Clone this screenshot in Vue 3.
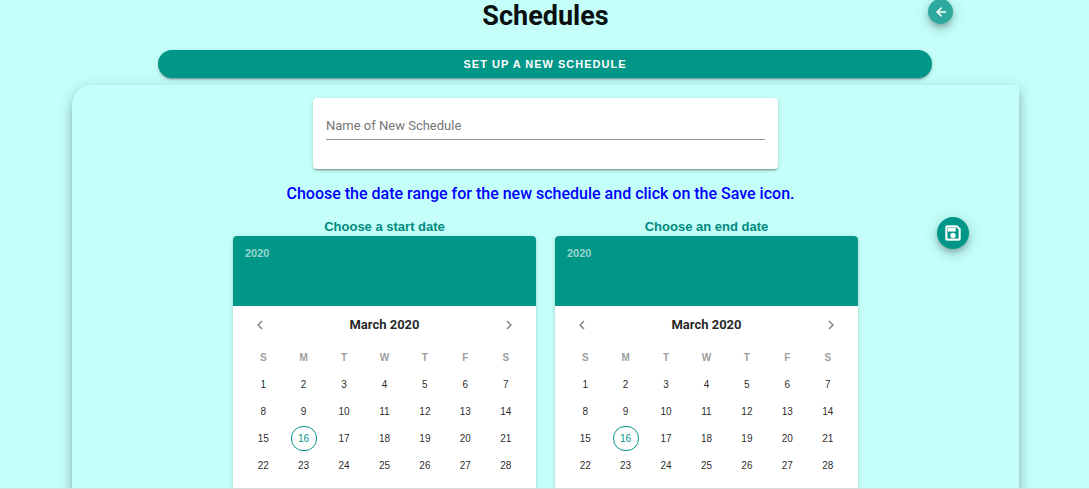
<script setup>
import { ref } from 'vue'

const name = ref('')
const weekdays = ['S', 'M', 'T', 'W', 'T', 'F', 'S']
const weeks = [0, 1, 2, 3].map((w) => weekdays.map((_, d) => w * 7 + d + 1))
const today = 16
const pickers = [
  { id: 'start', label: 'Choose a start date' },
  { id: 'end', label: 'Choose an end date' },
]
</script>

<template>
  <main class="page">
    <header class="top">
      <h1>Schedules</h1>
      <button class="round back" type="button" aria-label="Back">
        <svg viewBox="0 0 24 24" width="14" height="14" fill="currentColor" stroke="currentColor">
          <path d="M20 11v2H8l5.500 5.500-1.420 1.420L4.160 12l7.920-7.920L13.500 5.500 8 11h12z" />
        </svg>
      </button>
    </header>

    <button class="setup" type="button">SET UP A NEW SCHEDULE</button>

    <section class="panel">
      <div class="name-card">
        <input v-model="name" type="text" placeholder="Name of New Schedule" aria-label="Name of New Schedule" />
      </div>
      <p class="hint">Choose the date range for the new schedule and click on the Save icon.</p>

      <div class="range">
        <div class="pickers">
          <section v-for="p in pickers" :key="p.id" class="picker">
            <h2 :id="p.id">{{ p.label }}</h2>
            <div class="calendar">
              <div class="year"><button type="button">2020</button></div>
              <div class="month">
                <button class="arrow" type="button" aria-label="Previous month">
                  <svg viewBox="0 0 24 24" width="18" height="18" fill="currentColor">
                    <path d="M15.410 16.580L10.830 12l4.580-4.590L14 6l-6 6 6 6 1.410-1.420z" />
                  </svg>
                </button>
                <button class="month-name" type="button">March 2020</button>
                <button class="arrow" type="button" aria-label="Next month">
                  <svg viewBox="0 0 24 24" width="18" height="18" fill="currentColor">
                    <path d="M8.590 16.580L13.170 12 8.590 7.410 10 6l6 6-6 6-1.410-1.420z" />
                  </svg>
                </button>
              </div>
              <table :aria-labelledby="p.id">
                <thead>
                  <tr><th v-for="(d, i) in weekdays" :key="i" scope="col">{{ d }}</th></tr>
                </thead>
                <tbody>
                  <tr v-for="(week, i) in weeks" :key="i">
                    <td v-for="day in week" :key="day">
                      <button type="button" class="day" :class="{ today: day === today }">{{ day }}</button>
                    </td>
                  </tr>
                </tbody>
              </table>
            </div>
          </section>
        </div>
        <button class="round save" type="button" aria-label="Save">
          <svg viewBox="0 0 24 24" width="20" height="20" fill="currentColor" stroke="currentColor" stroke-width="0.500">
            <path fill-rule="evenodd" d="M17 3H5a2 2 0 0 0-2 2v14a2 2 0 0 0 2 2h14a2 2 0 0 0 2-2V7l-4-4zm2 16H5V5h11.170L19 7.830V19zM12 12a3 3 0 1 0 0 6 3 3 0 0 0 0-6zM6 6h9v4H6z" />
          </svg>
        </button>
      </div>
    </section>
  </main>
</template>

<style>
body {
  margin: 0;
  background: #c4fffa;
}
</style>

<style scoped>
* {
  box-sizing: border-box;
}
.page {
  display: flex;
  flex-direction: column;
  height: 100vh;
  overflow: hidden;
  padding: 0 70px 0 72px;
  border-bottom: 1px solid #dadada;
  background: #c4fffa;
  font-family: Roboto, "Liberation Sans", sans-serif;
  color: rgba(0, 0, 0, 0.87);
}
button {
  padding: 0;
  border: 0;
  background: none;
  color: inherit;
  font: inherit;
  cursor: pointer;
}
.top {
  display: grid;
  grid-template-columns: 1fr auto 1fr;
  flex: none;
  height: 50px;
}
h1 {
  grid-column: 2;
  margin: 0;
  color: #0a0f0f;
  font-size: 27px;
  font-weight: 700;
  line-height: 32px;
}
.round {
  display: flex;
  align-items: center;
  justify-content: center;
  justify-self: end;
  border-radius: 50%;
  background: #009688;
  color: #fff;
  box-shadow: 0 3px 5px -1px rgba(0, 0, 0, 0.2), 0 6px 10px rgba(0, 0, 0, 0.14), 0 1px 18px rgba(0, 0, 0, 0.12);
}
.back {
  width: 25px;
  height: 25px;
  margin: -1px 66px 0 0;
  background: #2ea99d;
}
.setup {
  flex: none;
  height: 28px;
  margin: 0 87px 7px 86px;
  border-radius: 14px;
  background: #009688;
  color: #fff;
  font-family: "Liberation Sans", Arial, sans-serif;
  font-size: 11px;
  font-weight: 700;
  letter-spacing: 1px;
  box-shadow: 0 3px 1px -2px rgba(0, 0, 0, 0.2), 0 2px 2px rgba(0, 0, 0, 0.14), 0 1px 5px rgba(0, 0, 0, 0.12);
}
.panel {
  display: flex;
  flex-direction: column;
  align-items: center;
  flex: none;
  padding: 13px 0 40px;
  border-radius: 20px 4px 4px 20px;
  background: #c4fffa;
  box-shadow: 0 5px 5px -3px rgba(0, 0, 0, 0.2), 0 8px 10px 1px rgba(0, 0, 0, 0.14), 0 3px 14px 2px rgba(0, 0, 0, 0.12);
}
.name-card {
  width: 465px;
  max-width: 100%;
  height: 71px;
  padding: 14px 13px;
  border-radius: 4px;
  background: #fff;
  box-shadow: 0 3px 1px -2px rgba(0, 0, 0, 0.2), 0 2px 2px rgba(0, 0, 0, 0.14), 0 1px 5px rgba(0, 0, 0, 0.12);
}
input {
  display: block;
  width: 100%;
  height: 28px;
  padding: 0;
  border: 0;
  border-bottom: 1px solid #949494;
  outline: 0;
  background: none;
  font: 13px/26px Roboto, sans-serif;
}
input::placeholder {
  color: #757575;
  opacity: 1;
}
.hint {
  margin: 14px 10px 12px 0;
  color: #00f;
  font-size: 16px;
  font-weight: 500;
  line-height: 22px;
}
.range {
  display: grid;
  grid-template-columns: 1fr auto 1fr;
  align-items: start;
  width: 100%;
}
.pickers {
  grid-column: 2;
  display: flex;
  gap: 19px;
}
.picker {
  width: 303px;
}
h2 {
  margin: 0;
  color: #00897f;
  font-family: "Liberation Sans", Arial, sans-serif;
  font-size: 13px;
  font-weight: 700;
  line-height: 19px;
  text-align: center;
}
.save {
  width: 32px;
  height: 32px;
  margin-right: 50px;
}
.calendar {
  border-radius: 4px;
  overflow: hidden;
  background: #fff;
  box-shadow: 0 3px 1px -2px rgba(0, 0, 0, 0.2), 0 2px 2px rgba(0, 0, 0, 0.14), 0 1px 5px rgba(0, 0, 0, 0.12);
}
.year {
  height: 70px;
  padding: 10px 12px;
  background: #009688;
  color: rgba(255, 255, 255, 0.6);
  font: 700 11px/14px "Liberation Sans", Arial, sans-serif;
}
.month {
  display: flex;
  align-items: center;
  justify-content: space-between;
  height: 37px;
  padding: 0 18px;
}
.arrow {
  display: flex;
  color: #858585;
}
.month-name {
  font-size: 13px;
  font-weight: 700;
}
table {
  width: 283px;
  margin: 0 10px 20px;
  border-collapse: collapse;
  table-layout: fixed;
  font-family: "Liberation Sans", Arial, sans-serif;
  font-size: 10px;
}
th {
  height: 28px;
  padding: 0;
  color: #9e9e9e;
  font-weight: 700;
}
tr {
  height: 27px;
}
td {
  padding: 0;
  text-align: center;
}
.day {
  display: block;
  width: 26px;
  height: 25px;
  margin: 0 auto;
  border-radius: 12px;
}
.today {
  border: 1px solid #009688;
  color: #009688;
}
</style>
